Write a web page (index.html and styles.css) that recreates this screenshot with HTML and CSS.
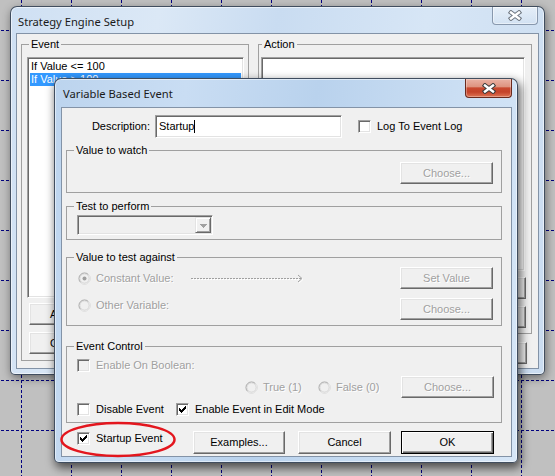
FILE: index.html
```html
<!DOCTYPE html>
<html lang="en">
<head>
<meta charset="utf-8">
<title>Strategy Engine Setup</title>
<link rel="stylesheet" href="styles.css">
</head>
<body>
<div class="desktop">
  <svg class="grid" width="555" height="476" aria-hidden="true">
    <defs>
      <pattern id="gridpat" x="21" y="30" width="50" height="50" patternUnits="userSpaceOnUse">
        <line x1="0.5" y1="0" x2="0.5" y2="50" stroke="#000080" stroke-width="1" stroke-dasharray="3 2"/>
        <line x1="0" y1="0.5" x2="50" y2="0.5" stroke="#000080" stroke-width="1" stroke-dasharray="3 2"/>
      </pattern>
    </defs>
    <rect width="555" height="476" fill="url(#gridpat)"/>
  </svg>

  <section class="win back">
    <header class="titlebar">
      <span class="title">Strategy Engine Setup</span>
      <span class="close close-inactive">
        <svg width="14" height="11" viewBox="0 0 14 11"><path d="M3 2.5 L11 8.5 M11 2.5 L3 8.5" stroke="#6e7680" stroke-width="4.4" stroke-linecap="square" fill="none"/><path d="M3 2.5 L11 8.5 M11 2.5 L3 8.5" stroke="#fff" stroke-width="2.4" stroke-linecap="square" fill="none"/></svg>
      </span>
    </header>
    <div class="client back-client">
      <fieldset class="group ev-group">
        <legend>Event</legend>
        <div class="listbox sunken ev-list">
          <div class="item">If Value &lt;= 100</div>
          <div class="item sel">If Value &gt; 100</div>
        </div>
        <div class="btn back-btn first">Add</div>
        <div class="btn back-btn">OK</div>
      </fieldset>
      <div class="act-col">
        <fieldset class="group act-group">
          <legend>Action</legend>
          <div class="listbox sunken act-list"></div>
          <div class="btn act-btn first">New...</div>
          <div class="btn act-btn">Edit...</div>
        </fieldset>
        <div class="btn act-btn close-btn">Close</div>
      </div>
    </div>
  </section>

  <section class="win front">
    <header class="titlebar">
      <span class="title">Variable Based Event</span>
      <span class="close close-active">
        <svg width="14" height="11" viewBox="0 0 14 11"><path d="M3 2.5 L11 8.5 M11 2.5 L3 8.5" stroke="#3b3b3b" stroke-width="4.4" stroke-linecap="square" fill="none"/><path d="M3 2.5 L11 8.5 M11 2.5 L3 8.5" stroke="#fff" stroke-width="2.4" stroke-linecap="square" fill="none"/></svg>
      </span>
    </header>
    <div class="client front-client">
      <div class="desc-row">
        <span class="desc-label">Description:</span>
        <div class="textbox sunken">Startup<span class="caret"></span></div>
        <div class="check-item log"><span class="checkbox sunken"></span><span>Log To Event Log</span></div>
      </div>

      <fieldset class="group g-watch">
        <legend>Value to watch</legend>
        <div class="gbody watch-body"><div class="btn dis">Choose...</div></div>
      </fieldset>

      <fieldset class="group g-test">
        <legend>Test to perform</legend>
        <div class="gbody test-body">
          <div class="combo sunken">
            <span class="combo-btn">
              <svg width="14" height="14" viewBox="0 0 14 14"><path d="M4 6h7v1h-1v1h-1v1h-1v1h-1v-1h-1v-1h-1v-1h-1z" fill="#a0a0a0"/></svg>
            </span>
          </div>
        </div>
      </fieldset>

      <fieldset class="group g-against">
        <legend>Value to test against</legend>
        <div class="gbody against-body">
          <div class="radio-item r-const">
            <svg class="radio" width="13" height="13" viewBox="0 0 13 13"><circle cx="6.5" cy="6.5" r="5.5" fill="#f0f0f0" stroke="#a0a0a0"/><path d="M10.4 2.6 A5.5 5.5 0 0 1 2.6 10.4" fill="none" stroke="#fff"/><circle cx="6.5" cy="6.5" r="4.5" fill="none" stroke="#dcdcdc"/><circle cx="6.5" cy="6.5" r="2" fill="#a0a0a0"/></svg>
            <span class="dis const-label">Constant Value:</span>
            <svg class="arrow" width="114" height="12" viewBox="0 0 114 12"><line x1="1" y1="7.5" x2="112" y2="7.5" stroke="#fff" stroke-dasharray="2 1"/><polyline points="108,4 112,7.5 108,11" fill="none" stroke="#fff"/><line x1="0" y1="6.5" x2="111" y2="6.5" stroke="#a0a0a0" stroke-dasharray="2 1"/><polyline points="107,3 111,6.5 107,10" fill="none" stroke="#a0a0a0"/></svg>
          </div>
          <div class="btn dis">Set Value</div>
          <div class="radio-item r-other">
            <svg class="radio" width="13" height="13" viewBox="0 0 13 13"><circle cx="6.5" cy="6.5" r="5.5" fill="#f0f0f0" stroke="#a0a0a0"/><path d="M10.4 2.6 A5.5 5.5 0 0 1 2.6 10.4" fill="none" stroke="#fff"/><circle cx="6.5" cy="6.5" r="4.5" fill="none" stroke="#dcdcdc"/></svg>
            <span class="dis">Other Variable:</span>
          </div>
          <div class="btn dis">Choose...</div>
        </div>
      </fieldset>

      <fieldset class="group g-control">
        <legend>Event Control</legend>
        <div class="gbody control-body">
          <div class="check-item"><span class="checkbox sunken off"></span><span class="dis">Enable On Boolean:</span></div>
          <div class="bool-row">
            <div class="radio-item r-true">
              <svg class="radio" width="13" height="13" viewBox="0 0 13 13"><circle cx="6.5" cy="6.5" r="5.5" fill="#f0f0f0" stroke="#a0a0a0"/><path d="M10.4 2.6 A5.5 5.5 0 0 1 2.6 10.4" fill="none" stroke="#fff"/><circle cx="6.5" cy="6.5" r="4.5" fill="none" stroke="#dcdcdc"/></svg>
              <span class="dis">True (1)</span>
            </div>
            <div class="radio-item r-false">
              <svg class="radio" width="13" height="13" viewBox="0 0 13 13"><circle cx="6.5" cy="6.5" r="5.5" fill="#f0f0f0" stroke="#a0a0a0"/><path d="M10.4 2.6 A5.5 5.5 0 0 1 2.6 10.4" fill="none" stroke="#fff"/><circle cx="6.5" cy="6.5" r="4.5" fill="none" stroke="#dcdcdc"/></svg>
              <span class="dis">False (0)</span>
            </div>
            <div class="btn dis bool-btn">Choose...</div>
          </div>
          <div class="flags-row">
            <div class="check-item flag-disable"><span class="checkbox sunken"></span><span>Disable Event</span></div>
            <div class="check-item"><span class="checkbox sunken"><svg width="11" height="11" viewBox="0 0 11 11"><path d="M2 4h1v3h-1z M3 5h1v3h-1z M4 6h1v3h-1z M5 5h1v3h-1z M6 4h1v3h-1z M7 3h1v3h-1z M8 2h1v3h-1z" fill="#000"/></svg></span><span>Enable Event in Edit Mode</span></div>
          </div>
        </div>
      </fieldset>

      <div class="bottom-row">
        <div class="check-item startup"><span class="checkbox sunken"><svg width="11" height="11" viewBox="0 0 11 11"><path d="M2 4h1v3h-1z M3 5h1v3h-1z M4 6h1v3h-1z M5 5h1v3h-1z M6 4h1v3h-1z M7 3h1v3h-1z M8 2h1v3h-1z" fill="#000"/></svg></span><span>Startup Event</span></div>
        <div class="btn tall ex">Examples...</div>
        <div class="btn tall cancel">Cancel</div>
        <div class="btn tall def ok">OK</div>
      </div>
    </div>
  </section>

  <svg class="annot" width="122" height="40" viewBox="0 0 122 40" aria-hidden="true">
    <ellipse cx="60" cy="19.5" rx="56.5" ry="16.5" fill="none" stroke="#e3161e" stroke-width="2.5"/>
  </svg>
</div>
</body>
</html>
```

FILE: styles.css
```css
* {
  box-sizing: border-box;
  margin: 0;
  padding: 0;
}

html, body {
  width: 555px;
  height: 476px;
  overflow: hidden;
}

body {
  background: #c0c0c0;
  font-family: "Liberation Sans", Arial, sans-serif;
  font-size: 11px;
  line-height: 13px;
  color: #000;
}

.desktop {
  position: relative;
  width: 555px;
  height: 476px;
}

.grid {
  position: absolute;
  left: 0;
  top: 0;
}

/* ---------- windows ---------- */
.win {
  position: absolute;
  display: flex;
  flex-direction: column;
  border: 1px solid rgba(40, 52, 68, 0.85);
  border-radius: 7px 7px 5px 5px;
}

.back {
  left: 10px;
  top: 6px;
  width: 535px;
  height: 369px;
  padding: 0 5px 5px 5px;
  background: linear-gradient(100deg, #cfe0f3 0%, #dbe8f6 25%, #c9dcf1 45%, #d7e6f6 70%, #cadcf0 100%);
  box-shadow: inset 0 0 0 1px rgba(255, 255, 255, 0.55), 1px 3px 10px rgba(0, 0, 0, 0.45);
}

.front {
  left: 54px;
  top: 78px;
  width: 464px;
  height: 385px;
  padding: 0 5px 5px 6px;
  background: linear-gradient(100deg, #bcd4ee 0%, #c9ddf3 25%, #b9d2ed 50%, #cde0f4 80%, #d6e6f7 100%);
  box-shadow: inset 0 0 0 1px rgba(255, 255, 255, 0.5), 2px 4px 10px 1px rgba(0, 0, 0, 0.6);
}

.titlebar {
  display: flex;
  justify-content: space-between;
  align-items: flex-start;
  flex: none;
}

.back .titlebar { height: 26px; }
.front .titlebar { height: 28px; }

.title {
  font-family: "Noto Sans", "Liberation Sans", sans-serif;
  font-size: 11.2px;
  line-height: 15px;
  color: #1a1a1a;
  margin-left: 2px;
  padding-top: 7px;
  white-space: nowrap;
}

.close {
  display: flex;
  align-items: center;
  justify-content: center;
  border-radius: 0 0 4px 4px;
}

.close-active {
  width: 47px;
  height: 19px;
  border: 1px solid #6a2a1d;
  border-top: none;
  background: linear-gradient(#eab2a4 0%, #de9480 42%, #c9492f 50%, #c4432a 72%, #de7555 100%);
  box-shadow: inset 0 0 0 1px rgba(255, 255, 255, 0.3);
}

.close-inactive {
  width: 46px;
  height: 18px;
  margin-right: 1px;
  border: 1px solid #8898ad;
  border-top: none;
  background: linear-gradient(rgba(255, 255, 255, 0.45), rgba(215, 228, 242, 0.3));
  box-shadow: inset 0 0 0 1px rgba(255, 255, 255, 0.45);
}

.client {
  flex: 1;
  background: #f0f0f0;
  border: 1px solid #8393a7;
}

/* ---------- common controls ---------- */
.sunken {
  border: 1px solid;
  border-color: #a0a0a0 #fff #fff #a0a0a0;
  box-shadow: inset 1px 1px 0 #696969, inset -1px -1px 0 #e3e3e3;
  background: #fff;
}

.btn {
  display: flex;
  align-items: center;
  justify-content: center;
  width: 93px;
  height: 22px;
  background: #f0f0f0;
  border: 1px solid;
  border-color: #fff #696969 #696969 #fff;
  box-shadow: inset -1px -1px 0 #a0a0a0, inset 1px 1px 0 #e3e3e3;
  white-space: nowrap;
  flex: none;
}

.btn.tall { height: 23px; }

.btn.def {
  border-color: #000;
  box-shadow: inset 1px 1px 0 #fff, inset -1px -1px 0 #696969, inset -2px -2px 0 #a0a0a0;
}

.dis {
  color: #a0a0a0;
  text-shadow: 1px 1px 0 #fff;
}

.group {
  border: 1px solid #a0a0a0;
  min-width: 0;
  padding: 0;
}

.group > legend {
  margin-left: 7px;
  padding: 0 2px;
  height: 13px;
  line-height: 13px;
  white-space: nowrap;
}

.check-item {
  display: flex;
  align-items: center;
  gap: 6px;
  height: 13px;
  white-space: nowrap;
  flex: none;
}

.checkbox {
  display: flex;
  align-items: center;
  justify-content: center;
  width: 13px;
  height: 13px;
  flex: none;
}

.checkbox.off { background: #f0f0f0; }

.radio-item {
  display: flex;
  align-items: center;
  gap: 5px;
  height: 13px;
  white-space: nowrap;
}

.radio { flex: none; display: block; }

/* ---------- back window content ---------- */
.back-client {
  display: flex;
  align-items: flex-start;
}

.ev-group {
  margin: 4px 0 0 4px;
  width: 228px;
  height: 323px;
}

.ev-list {
  margin: 6px 0 0 5px;
  width: 217px;
  height: 241px;
  padding: 2px;
}

.item {
  height: 13px;
  padding-left: 1px;
  white-space: nowrap;
}

.item.sel {
  background: #3399ff;
  color: #fff;
}

.back-btn {
  width: 70px;
  margin: 7px 0 0 7px;
  justify-content: flex-start;
  padding-left: 20px;
}

.back-btn.first { margin-top: 5px; }

.act-col {
  display: flex;
  flex-direction: column;
  margin: 4px 0 0 9px;
  width: 274px;
}

.act-group {
  height: 296px;
}

.act-group > legend { margin-left: 3px; }

.act-list {
  margin: 6px 0 0 2px;
  width: 264px;
  height: 214px;
}

.act-btn {
  width: 75px;
  margin: 7px 5px 0 auto;
}

.act-btn.first { margin-top: 6px; }

.close-btn {
  margin-top: 8px;
  align-self: flex-end;
}

/* ---------- front dialog content ---------- */
.front-client {
  display: flex;
  flex-direction: column;
}

.desc-row {
  display: flex;
  align-items: center;
  height: 23px;
  margin-top: 7px;
}

.desc-label {
  width: 88px;
  text-align: right;
  white-space: nowrap;
}

.textbox {
  display: flex;
  align-items: center;
  margin-left: 5px;
  width: 187px;
  height: 23px;
  padding-left: 3px;
}

.caret {
  display: inline-block;
  width: 1px;
  height: 13px;
  background: #000;
}

.log { margin-left: 16px; }

.g-watch, .g-test, .g-against, .g-control {
  margin: 0 9px 0 4px;
}

.g-watch { margin-top: 6px; }
.g-test { margin-top: 7px; }
.g-against { margin-top: 11px; }
.g-control { margin-top: 14px; }

.watch-body {
  display: flex;
  justify-content: flex-end;
  padding: 5px 8px 8px 0;
}

.test-body {
  padding: 2px 0 4px 10px;
}

.combo {
  display: flex;
  justify-content: flex-end;
  align-items: flex-start;
  width: 136px;
  height: 20px;
  padding: 1px 1px 0 0;
  background: #f0f0f0;
}

.combo-btn {
  display: flex;
  align-items: center;
  justify-content: center;
  width: 16px;
  height: 16px;
  background: #f0f0f0;
  border: 1px solid;
  border-color: #e3e3e3 #696969 #696969 #e3e3e3;
  box-shadow: inset 1px 1px 0 #fff, inset -1px -1px 0 #a0a0a0;
}

.against-body {
  display: grid;
  grid-template-columns: 1fr 93px;
  grid-template-rows: 22px 22px;
  row-gap: 9px;
  padding: 3px 8px 5px 11px;
}

.r-const { align-self: center; }

.const-label { width: 95px; }

.arrow { display: block; flex: none; margin-left: -5px; }

.r-other {
  align-self: start;
  margin-top: 1px;
}

.control-body {
  display: flex;
  flex-direction: column;
  padding: 6px 7px 6px 10px;
}

.bool-row {
  display: flex;
  align-items: center;
  height: 22px;
  margin-top: 4px;
}

.r-true {
  margin-left: 168px;
  width: 73px;
}

.bool-btn { margin-left: auto; }

.flags-row {
  display: flex;
  align-items: center;
  height: 13px;
  margin-top: 5px;
}

.flag-disable { width: 99px; }

.bottom-row {
  display: flex;
  align-items: flex-start;
  height: 23px;
  margin-top: 8px;
  padding-left: 15px;
}

.startup {
  width: 116px;
  margin-top: 1px;
}

.ex { width: 92px; }
.cancel { margin-left: 13px; }
.ok { margin-left: 10px; }

/* ---------- annotation ---------- */
.annot {
  position: absolute;
  left: 58px;
  top: 420px;
}
```
